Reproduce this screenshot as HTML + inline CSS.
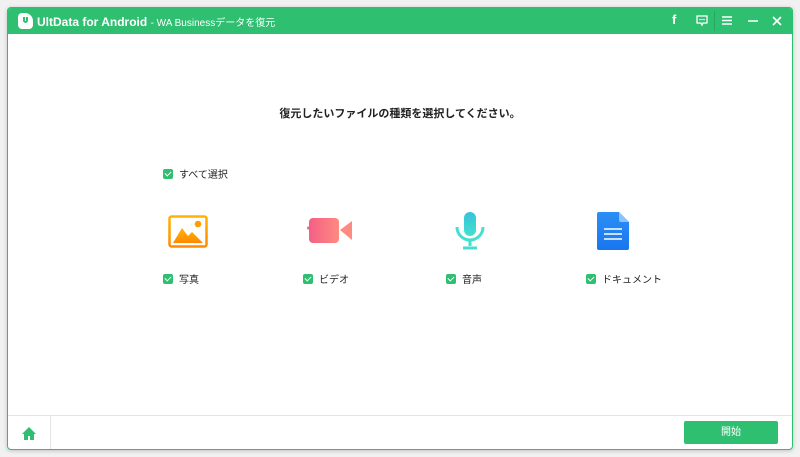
<!DOCTYPE html>
<html><head><meta charset="utf-8"><style>
*{margin:0;padding:0;box-sizing:border-box}
body{width:800px;height:457px;background:#f1f1f1;font-family:"Liberation Sans","Noto Sans CJK JP",sans-serif;position:relative;overflow:hidden}
.win{position:absolute;left:7px;top:7px;width:786px;height:443px;background:#fff;border:1px solid #2fbf71;border-radius:4px;overflow:hidden;box-shadow:0 1px 4px rgba(0,0,0,.2)}
.tb{position:absolute;left:0;top:0;width:100%;height:26px;background:#2fbf71;color:#fff}
.t{position:absolute;left:29px;top:6px;font-size:12px;font-weight:bold;white-space:nowrap}
.t span{font-weight:normal;font-size:10px}
.logo{position:absolute;left:10px;top:5px;width:15px;height:16px;background:#fff;border-radius:4px 8px 4px 4px}
.ic{position:absolute;top:4px;color:#fff;font-size:14px}
.cb{display:inline-block;width:10px;height:10px;background:#2fbf71;border-radius:2px;position:relative;vertical-align:middle}
.cb:after{content:"";position:absolute;left:3px;top:1px;width:3px;height:5px;border:solid #fff;border-width:0 1.5px 1.5px 0;transform:rotate(45deg)}
.lbl{position:absolute;font-size:10px;color:#222;white-space:nowrap}
.lbl .cb{margin-right:6px;margin-top:-2px}
.foot{position:absolute;left:0;top:407px;width:100%;height:36px;border-top:1px solid #e4e4e4}
.btn{position:absolute;left:676px;top:413px;width:94px;height:23px;background:#2fbf71;color:#fff;font-size:10px;text-align:center;line-height:23px;border-radius:2px}
</style></head><body>
<div class="win">
 <div class="tb">
  <div class="logo"><div style="position:absolute;left:5px;top:4px;width:5px;height:6px;border:2px solid #2fbf71;border-top:none;border-radius:0 0 3px 3px"></div></div>
  <div class="t">UltData for Android <span>- WA Businessデータを復元</span></div>
  <div class="ic" style="left:664px;font-weight:bold;font-size:13px">f</div>
  <svg style="position:absolute;left:688px;top:7px" width="12" height="12" viewBox="0 0 12 12"><path d="M1 1h10v7H7l-1 2-1-2H1z" fill="none" stroke="#fff" stroke-width="1.3"/><circle cx="4" cy="4.5" r=".8" fill="#fff"/><circle cx="6" cy="4.5" r=".8" fill="#fff"/><circle cx="8" cy="4.5" r=".8" fill="#fff"/></svg>
  <div style="position:absolute;left:706px;top:3px;width:1px;height:20px;background:#27a862"></div>
  <svg style="position:absolute;left:714px;top:8px" width="10" height="9"><path d="M0 1h10M0 4.5h10M0 8h10" stroke="#fff" stroke-width="1.5"/></svg>
  <svg style="position:absolute;left:740px;top:12px" width="10" height="2"><path d="M0 1h10" stroke="#fff" stroke-width="1.6"/></svg>
  <svg style="position:absolute;left:764px;top:8px" width="10" height="10"><path d="M1 1l8 8M9 1l-8 8" stroke="#fff" stroke-width="1.6"/></svg>
 </div>
 <div style="position:absolute;left:0;top:97px;width:100%;text-align:center;font-size:11px;font-weight:bold;color:#222">復元したいファイルの種類を選択してください。</div>
 <div class="lbl" style="left:155px;top:158px"><span class="cb"></span>すべて選択</div>

 <svg style="position:absolute;left:160px;top:207px" width="40" height="33" viewBox="0 0 40 33"><defs><linearGradient id="g1" x1="0" y1="0" x2="0" y2="1"><stop offset="0" stop-color="#ffb300"/><stop offset="1" stop-color="#ff8a00"/></linearGradient></defs><rect x="1.5" y="1.5" width="37" height="30" rx="2" fill="none" stroke="url(#g1)" stroke-width="2.5"/><path d="M5 28l9-15 6 8 4-4 11 11z" fill="url(#g1)"/><circle cx="30" cy="9" r="3.3" fill="#ffa000"/></svg>
 <svg style="position:absolute;left:299px;top:209px" width="46" height="27" viewBox="0 0 46 27"><defs><linearGradient id="g2" x1="0" x2="1"><stop offset="0" stop-color="#f45f85"/><stop offset="1" stop-color="#ff8a80"/></linearGradient></defs><rect x="2" y="1" width="30" height="25" rx="4" fill="url(#g2)"/><circle cx="1.5" cy="11" r="1.5" fill="#f45f85"/><path d="M33 13l12-9v19z" fill="#ff8a80"/></svg>
 <svg style="position:absolute;left:447px;top:204px" width="30" height="38" viewBox="0 0 30 38"><defs><linearGradient id="g3" x1="0" y1="0" x2="0" y2="1"><stop offset="0" stop-color="#34c3d9"/><stop offset="1" stop-color="#45dfd0"/></linearGradient></defs><rect x="9" y="0" width="12" height="24" rx="6" fill="url(#g3)"/><path d="M2 15a13 13 0 0 0 26 0" fill="none" stroke="#45dfd0" stroke-width="3"/><path d="M15 28v6M8 36h14" stroke="#45dfd0" stroke-width="3"/></svg>
 <svg style="position:absolute;left:589px;top:204px" width="33" height="38" viewBox="0 0 33 38"><defs><linearGradient id="g4" x1="0" y1="0" x2="0" y2="1"><stop offset="0" stop-color="#2b8ff5"/><stop offset="1" stop-color="#1976f0"/></linearGradient></defs><path d="M2 0h20l10 10v26a2 2 0 0 1-2 2H2a2 2 0 0 1-2-2V2a2 2 0 0 1 2-2z" fill="url(#g4)"/><path d="M22 0v8a2 2 0 0 0 2 2h8z" fill="#8cc2ff"/><path d="M7 17h18M7 22h18M7 27h18" stroke="#fff" stroke-width="1.6"/></svg>

 <div class="lbl" style="left:155px;top:263px"><span class="cb"></span>写真</div>
 <div class="lbl" style="left:295px;top:263px"><span class="cb"></span>ビデオ</div>
 <div class="lbl" style="left:438px;top:263px"><span class="cb"></span>音声</div>
 <div class="lbl" style="left:578px;top:263px"><span class="cb"></span>ドキュメント</div>

 <div class="foot"><div style="position:absolute;left:42px;top:0;width:1px;height:36px;background:#e4e4e4"></div>
  <svg style="position:absolute;left:14px;top:11px" width="14" height="13" viewBox="0 0 14 13"><path d="M7 0L0 7h2v6h4V9h2v4h4V7h2z" fill="#2fbf71"/></svg>
 </div>
 <div class="btn">開始</div>
</div>
</body></html>
